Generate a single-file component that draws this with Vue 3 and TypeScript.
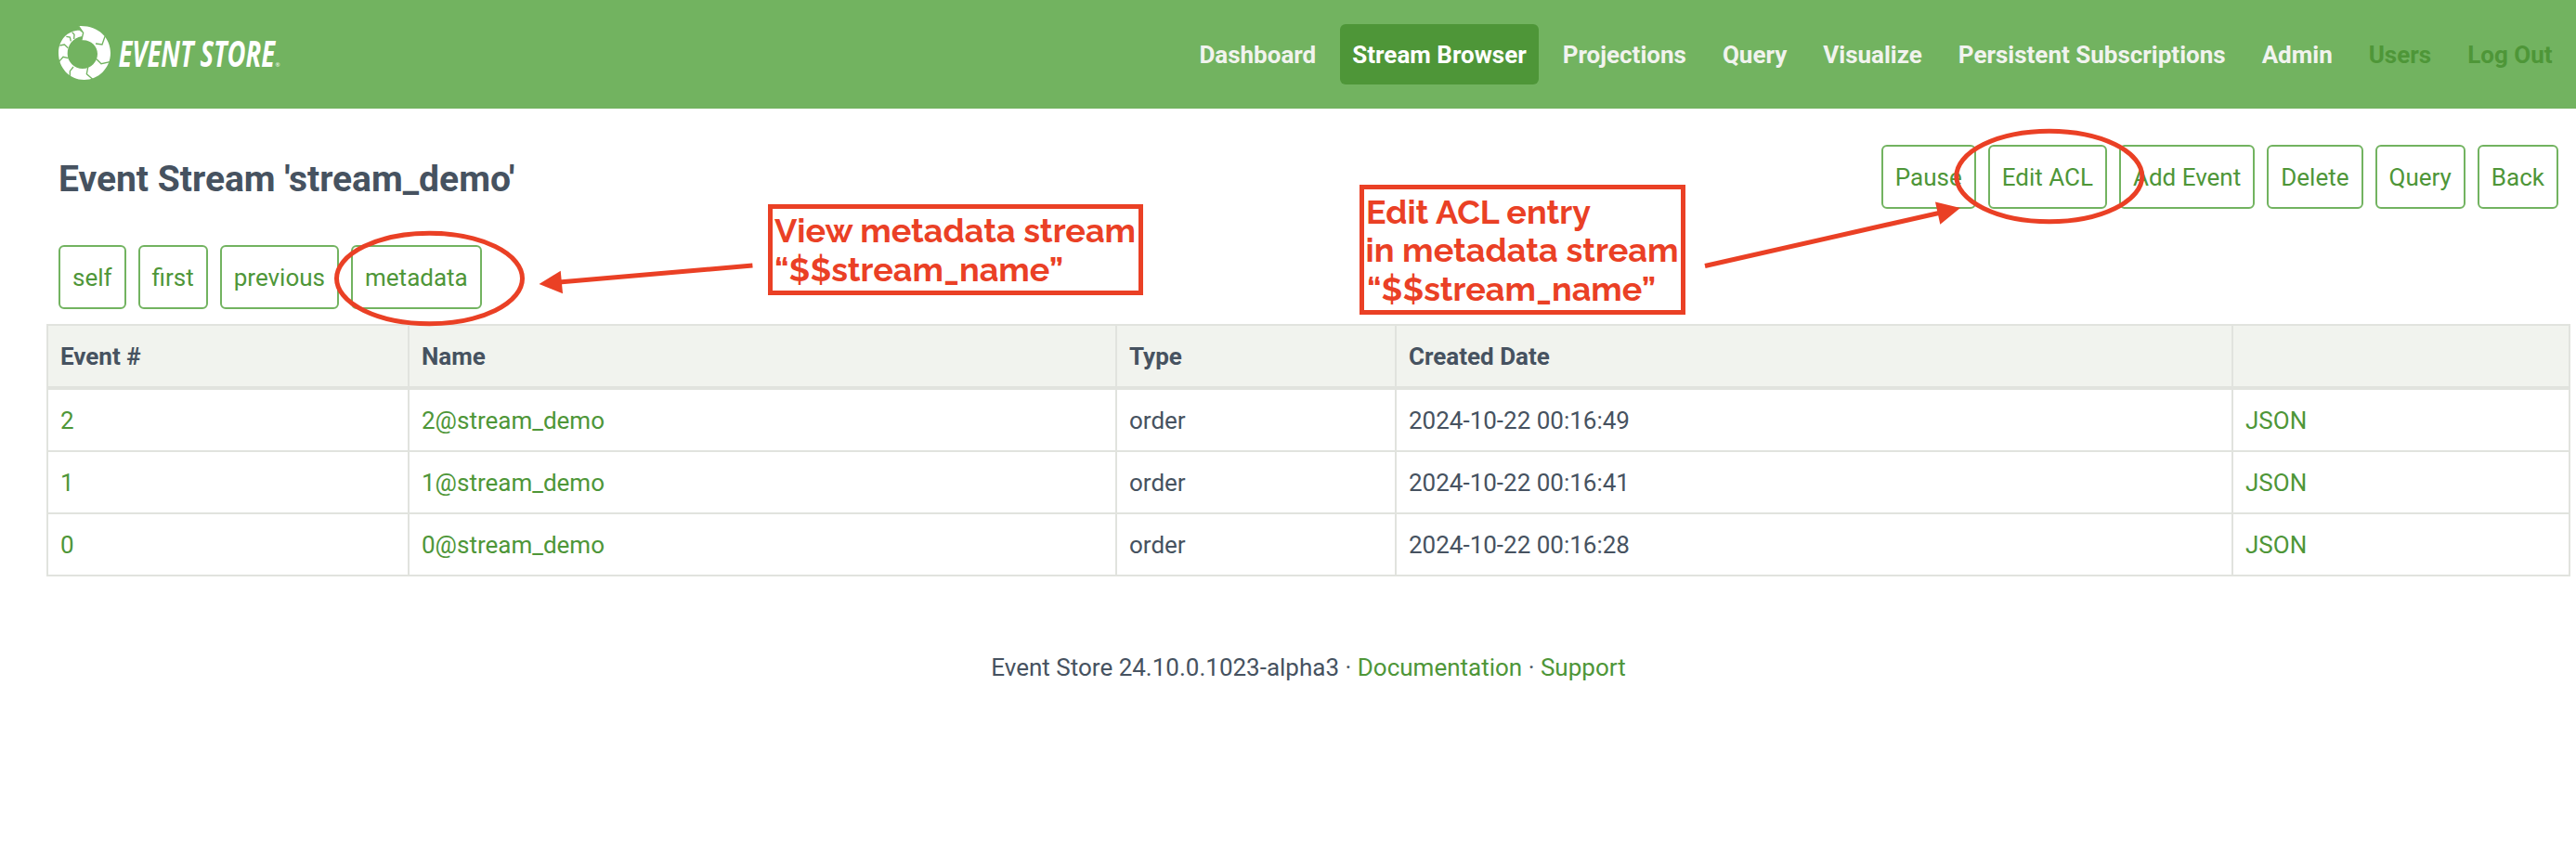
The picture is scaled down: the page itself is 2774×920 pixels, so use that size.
<script setup lang="ts">
interface NavItem {
  label: string
  state?: 'active' | 'muted'
}

interface StreamEvent {
  id: number
  name: string
  type: string
  created: string
}

const nav: NavItem[] = [
  { label: 'Dashboard' },
  { label: 'Stream Browser', state: 'active' },
  { label: 'Projections' },
  { label: 'Query' },
  { label: 'Visualize' },
  { label: 'Persistent Subscriptions' },
  { label: 'Admin' },
  { label: 'Users', state: 'muted' },
  { label: 'Log Out', state: 'muted' },
]

const actions: string[] = ['Pause', 'Edit ACL', 'Add Event', 'Delete', 'Query', 'Back']
const links: string[] = ['self', 'first', 'previous', 'metadata']

const events: StreamEvent[] = [
  { id: 2, name: '2@stream_demo', type: 'order', created: '2024-10-22 00:16:49' },
  { id: 1, name: '1@stream_demo', type: 'order', created: '2024-10-22 00:16:41' },
  { id: 0, name: '0@stream_demo', type: 'order', created: '2024-10-22 00:16:28' },
]
</script>

<template>
  <div class="page">
    <header class="header">
      <svg class="logo" width="250" height="90" viewBox="0 0 250 90">
        <g transform="scale(0.33333)">
          <path
            class="ring"
            fill-rule="evenodd"
            d="M43 54C105 50 147 90 147 141C147 190 108 228 62 228C15 228 -21 190 -21 141C-21 100 7 68 47 68L58 77L53 100C80 96 105 117 105 144C105 170 84 192 57 192C30 192 8 170 8 144C8 116 24 93 55 87L58 77Z"
            transform="translate(21 0)"
          />
          <g class="cuts" transform="translate(-69 0)">
            <path d="M131 50L149 76L143 102" />
            <path d="M219 88L210 114L189 111" />
            <path d="M235 170L207 176L192 161" />
            <path d="M179 226L160 209L164 188" />
            <path d="M106 224L106 200L117 186" />
            <path d="M70 170L84 154L101 158" />
            <path d="M73 117L88 114L100 125" />
            <path d="M94 88L106 90L109 103" />
            <path d="M113 74L120 82L119 96" />
          </g>
        </g>
        <text class="wordmark" x="64.5" y="62.3" textLength="168.5" lengthAdjust="spacingAndGlyphs">EVENT STORE</text>
        <text class="mark" x="233.5" y="62">®</text>
      </svg>
      <nav class="nav">
        <a v-for="item in nav" :key="item.label" class="nav-item" :class="item.state">{{ item.label }}</a>
      </nav>
    </header>

    <main class="content">
      <div class="title-row">
        <h1 class="title">Event Stream 'stream_demo'</h1>
        <div class="buttons">
          <a v-for="label in actions" :key="label" class="button">{{ label }}</a>
        </div>
      </div>
      <div class="buttons paging">
        <a v-for="label in links" :key="label" class="button">{{ label }}</a>
      </div>

      <table class="events">
        <colgroup>
          <col class="col-id" />
          <col class="col-name" />
          <col class="col-type" />
          <col class="col-date" />
          <col class="col-json" />
        </colgroup>
        <thead>
          <tr>
            <th>Event #</th>
            <th>Name</th>
            <th>Type</th>
            <th>Created Date</th>
            <th></th>
          </tr>
        </thead>
        <tbody>
          <tr v-for="event in events" :key="event.id">
            <td><a class="link">{{ event.id }}</a></td>
            <td><a class="link">{{ event.name }}</a></td>
            <td>{{ event.type }}</td>
            <td>{{ event.created }}</td>
            <td><a class="link">JSON</a></td>
          </tr>
        </tbody>
      </table>

      <footer class="footer">
        Event Store 24.10.0.1023-alpha3 · <a class="link">Documentation</a> · <a class="link">Support</a>
      </footer>
    </main>

    <svg class="notes" width="2774" height="920" viewBox="0 0 2774 920">
      <g class="outline">
        <ellipse cx="462.5" cy="300" rx="100" ry="48.7" />
        <ellipse cx="2206.8" cy="190" rx="100" ry="48.7" />
        <rect x="829.5" y="222.5" width="399" height="93" />
        <rect x="1466.5" y="201.5" width="346" height="135" />
        <path d="M810.4 286L602 304" />
        <path d="M1836 286.5L2090 229" />
      </g>
      <path class="head" d="M580.5 306L603.7 291.7L606 316.3Z" />
      <path class="head" d="M2111 224L2084 217.5L2089.3 241.7Z" />
      <g class="note">
        <text x="834" y="261" textLength="389" lengthAdjust="spacingAndGlyphs">View metadata stream</text>
        <text x="834" y="303" textLength="311" lengthAdjust="spacingAndGlyphs">“$$stream_name”</text>
        <text x="1471" y="240.5" textLength="242" lengthAdjust="spacingAndGlyphs">Edit ACL entry</text>
        <text x="1470.5" y="282" textLength="337" lengthAdjust="spacingAndGlyphs">in metadata stream</text>
        <text x="1472" y="324" textLength="311" lengthAdjust="spacingAndGlyphs">“$$stream_name”</text>
      </g>
    </svg>
  </div>
</template>

<style>
body {
  margin: 0;
  background: #fff;
}
</style>

<style scoped>
.page {
  position: relative;
  width: 2774px;
  height: 920px;
  overflow: hidden;
  background: #fff;
  color: #465260;
  font: 400 26px/39px Roboto, 'Liberation Sans', sans-serif;
}

.header {
  display: flex;
  align-items: center;
  justify-content: space-between;
  box-sizing: border-box;
  height: 117px;
  padding: 0 12.5px 0 63px;
  background: #72b360;
}

.logo {
  display: block;
  margin-top: -7px;
  overflow: visible;
}

.ring,
.wordmark,
.mark {
  fill: #fff;
}

.cuts {
  fill: none;
  stroke: #72b360;
  stroke-width: 4;
}

.wordmark {
  font: italic 700 40px 'Open Sans', sans-serif;
}

.mark {
  font: 400 6px 'Open Sans', sans-serif;
}

.nav {
  display: flex;
  gap: 13px;
}

.nav-item {
  padding: 14px 13px 12px;
  border-radius: 6px;
  color: #f1f3ee;
  font-weight: 700;
  white-space: nowrap;
}

.nav-item.active {
  background: #4e9638;
  color: #fff;
}

.nav-item.muted {
  color: #4e9638;
}

.content {
  padding: 39px 6px 0 50px;
}

.title-row {
  display: flex;
  align-items: center;
  justify-content: space-between;
  height: 69px;
  padding: 0 13px;
}

.title {
  margin: 5px 0 0;
  font-size: 39px;
  font-weight: 700;
  line-height: 50px;
}

.buttons {
  display: flex;
  gap: 13px;
}

.paging {
  padding: 39px 13px 16px;
}

.button {
  box-sizing: border-box;
  height: 69px;
  padding: 14px 13px 12px;
  border: 2px solid #72b360;
  border-radius: 6px;
  color: #4e9638;
  white-space: nowrap;
}

.events {
  width: 2718px;
  table-layout: fixed;
  border-collapse: separate;
  border-spacing: 0;
  border-top: 2px solid #e1e3de;
  border-left: 2px solid #e1e3de;
}

.col-id {
  width: 389px;
}

.col-name {
  width: 762px;
}

.col-type {
  width: 301px;
}

.col-date {
  width: 901px;
}

.col-json {
  width: 363px;
}

.events th,
.events td {
  height: 39px;
  padding: 14px 13px 12px;
  border-right: 2px solid #e1e3de;
  border-bottom: 2px solid #e1e3de;
  text-align: left;
}

.events th {
  border-bottom-width: 4px;
  background: #f1f3ee;
  font-weight: 700;
}

.link {
  color: #4e9638;
}

.footer {
  padding-top: 79px;
  text-align: center;
}

.notes {
  position: absolute;
  top: 0;
  left: 0;
  pointer-events: none;
}

.outline {
  fill: none;
  stroke: #ea4025;
  stroke-width: 5;
}

.head {
  fill: #ea4025;
}

.note {
  fill: #ea4025;
  font: 700 36px Raleway, Lato, sans-serif;
}
</style>
